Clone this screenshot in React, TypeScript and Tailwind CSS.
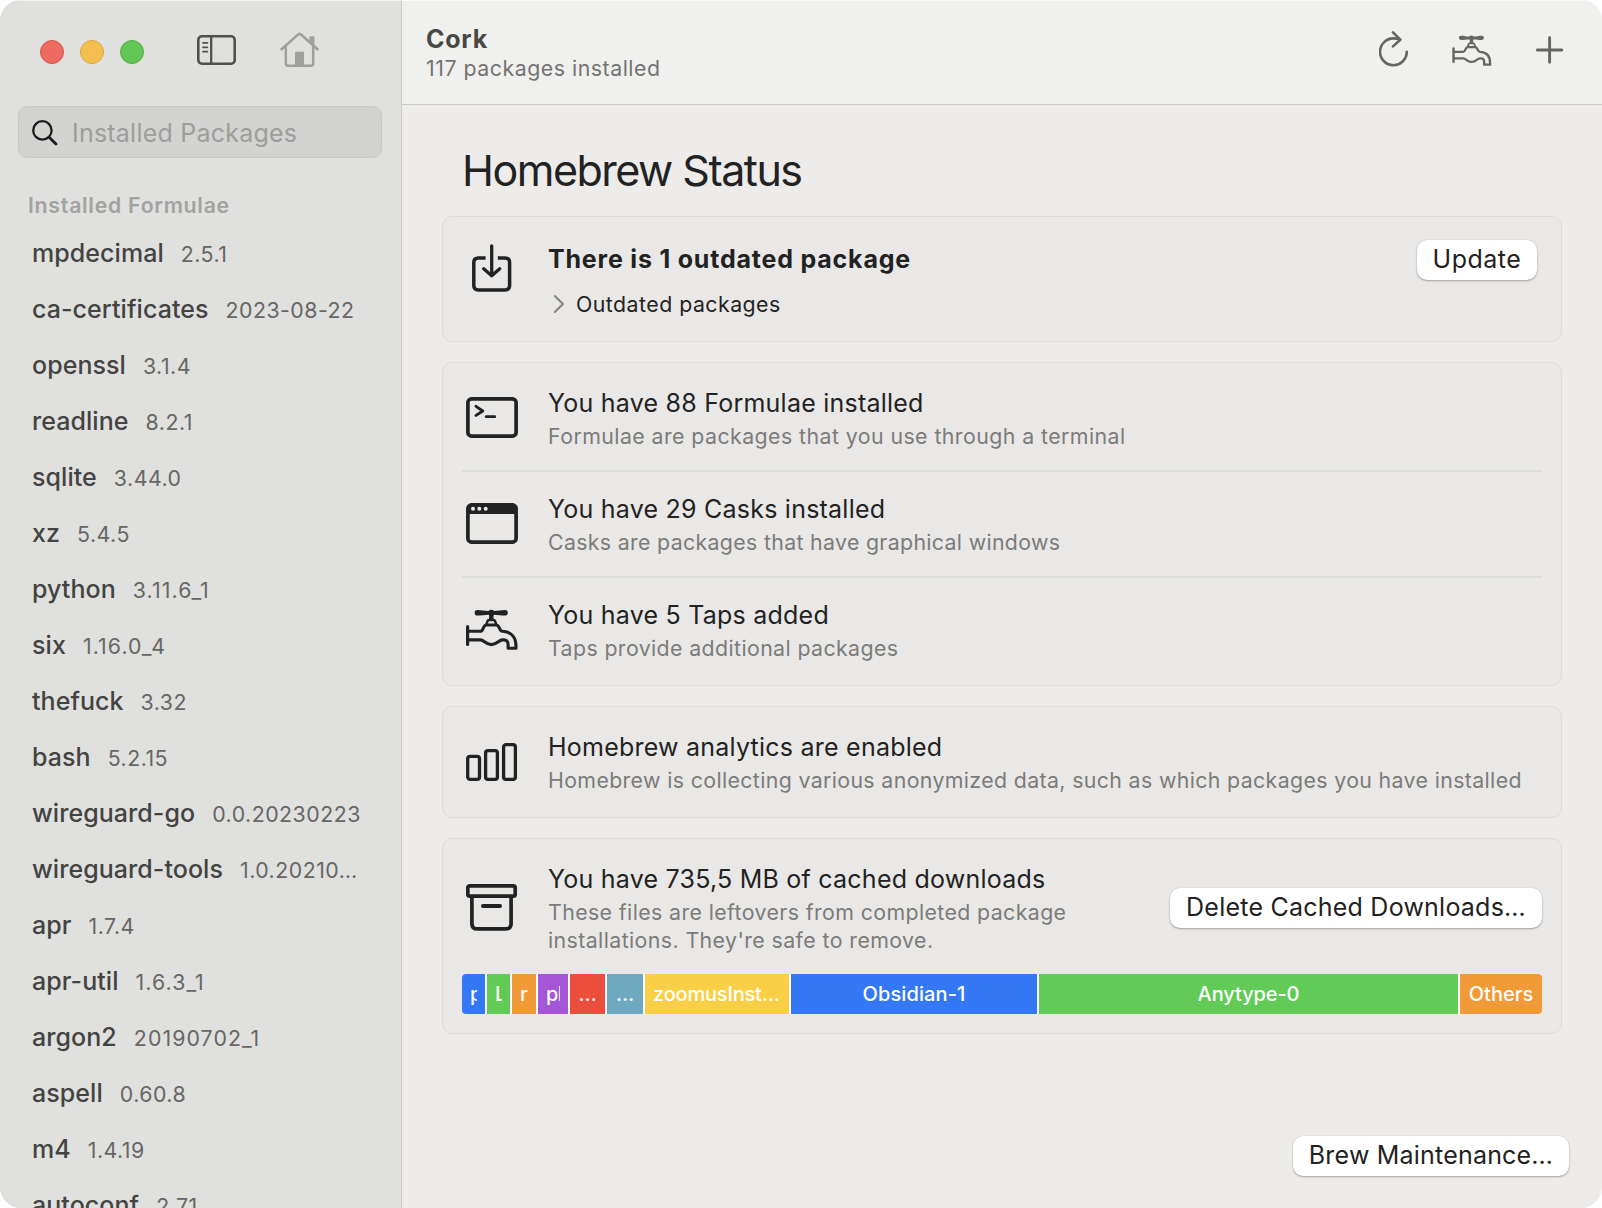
import type { ReactNode } from "react";

const formulae: [string, string][] = [
  ["mpdecimal", "2.5.1"],
  ["ca-certificates", "2023-08-22"],
  ["openssl", "3.1.4"],
  ["readline", "8.2.1"],
  ["sqlite", "3.44.0"],
  ["xz", "5.4.5"],
  ["python", "3.11.6_1"],
  ["six", "1.16.0_4"],
  ["thefuck", "3.32"],
  ["bash", "5.2.15"],
  ["wireguard-go", "0.0.20230223"],
  ["wireguard-tools", "1.0.20210…"],
  ["apr", "1.7.4"],
  ["apr-util", "1.6.3_1"],
  ["argon2", "20190702_1"],
  ["aspell", "0.60.8"],
  ["m4", "1.4.19"],
  ["autoconf", "2.71"],
];

/* ---------- Icons ---------- */

function SidebarIcon() {
  return (
    <svg width="39" height="30" viewBox="0 0 39 30" fill="none" stroke="#50504f">
      <rect x="1.3" y="1.3" width="36.4" height="27.4" rx="3.6" strokeWidth="2.6" />
      <path d="M14.2 1.5V28.5" strokeWidth="2.3" />
      <path d="M6 7.8h4.4M6 12.3h4.4M6 16.7h4.4" strokeWidth="1.7" strokeLinecap="round" />
    </svg>
  );
}

function HouseIcon() {
  return (
    <svg width="40" height="36" viewBox="0 0 40 36" fill="none" stroke="#9f9f9d">
      <path d="M1.5 17.2 18 2.6Q19.5 1.3 21 2.6L37.5 17.2" strokeWidth="2.6" strokeLinecap="round" strokeLinejoin="round" />
      <path d="M5.8 14V31.2Q5.8 33.8 8.4 33.8H30.6Q33.2 33.8 33.2 31.2V14" strokeWidth="2.5" />
      <path d="M30.2 4.2h3.4q.8 0 .8.8v8.8l-5-4.4V5q0-.8.8-.8Z" fill="#9f9f9d" stroke="none" />
      <path d="M15 34V21q0-1.2 1.2-1.2h6.6q1.2 0 1.2 1.2V34Z" fill="#9f9f9d" stroke="none" />
    </svg>
  );
}

function SearchIcon() {
  return (
    <svg width="26" height="26" viewBox="0 0 26 26" fill="none" stroke="#1b1b1b" strokeLinecap="round">
      <circle cx="10.4" cy="10.4" r="9.2" strokeWidth="2.3" />
      <path d="m17.4 17.4 6.6 6.6" strokeWidth="2.8" />
    </svg>
  );
}

function RefreshIcon() {
  return (
    <svg width="30" height="36" viewBox="0 0 30 36" fill="none" stroke="#656564" strokeWidth="2.6" strokeLinecap="round" strokeLinejoin="round">
      <path d="M27.8 20.8A13.4 13.4 0 1 1 14.4 7.4Q18.5 7.4 21 8.4" />
      <path d="M14 1.4 21.3 8.7 14 15.4" />
    </svg>
  );
}

function FaucetIcon({ width, height, color }: { width: number; height: number; color: string }) {
  return (
    <svg width={width} height={height} viewBox="0 0 52 41" fill="none" stroke={color} strokeLinecap="round" strokeLinejoin="round">
      <path d="M11.4 1C15 1 19 2 22.4 2a3.8 3.8 0 0 1 5.8 0C31.6 2 35.4 1 39 1a2.8 2.8 0 0 1 0 5.6C35.4 6.6 31.6 5.8 28.2 5.8a3.8 3.8 0 0 1-5.8 0C19 5.8 15 6.6 11.4 6.6a2.8 2.8 0 0 1 0-5.6Z" fill={color} stroke="none" />
      <path d="M25.3 5.5V11" strokeWidth="4.4" strokeLinecap="butt" />
      <path d="M20.4 15.4 21.6 11.9Q21.9 11.1 22.8 11.1H27.8Q28.7 11.1 29 11.9L30.2 15.4" strokeWidth="2.5" />
      <path d="M1.6 17.7V35.4" strokeWidth="3.2" />
      <path d="M2 22.3H14.4C17.6 22.3 16.8 16 20.4 16H30.2C33.8 16 33 22 36.4 22.3C44.5 22.6 50 27.4 50 37.4V39.2H42.1V35.4C42.1 32.6 40.6 30.9 38 30.9H36.4C32.6 30.9 31.6 35.6 25.4 35.6S18.2 30.9 14.4 30.9H2" strokeWidth="3.1" />
    </svg>
  );
}

function PlusIcon() {
  return (
    <svg width="28" height="28" viewBox="0 0 28 28" fill="none" stroke="#656564" strokeWidth="2.9" strokeLinecap="round">
      <path d="M13.6 1.8V26.2M1.4 14H25.8" />
    </svg>
  );
}

function DownloadIcon() {
  return (
    <svg width="40" height="48" viewBox="0 0 40 48" fill="none" stroke="#222" strokeLinecap="round" strokeLinejoin="round">
      <path d="M13.6 14H6.4Q1.8 14 1.8 18.6V41.3Q1.8 45.9 6.4 45.9H33Q37.6 45.9 37.6 41.3V18.6Q37.6 14 33 14H25.8" strokeWidth="3.5" strokeLinecap="butt" />
      <path d="M19.7 1.8V31M11.7 24.8 19.7 31.8 27.7 24.8" strokeWidth="3.3" />
    </svg>
  );
}

function TerminalIcon() {
  return (
    <svg width="52" height="41" viewBox="0 0 52 41" fill="none" stroke="#222" strokeLinecap="round" strokeLinejoin="round">
      <rect x="1.9" y="1.9" width="48.2" height="37.2" rx="3.6" strokeWidth="3.7" />
      <path d="M10 9.4 16.8 14 10 18.4" strokeWidth="2.9" />
      <path d="M20.2 19.7H28.8" strokeWidth="2.7" />
    </svg>
  );
}

function WindowIcon() {
  return (
    <svg width="52" height="41" viewBox="0 0 52 41" fill="none">
      <rect x="1.9" y="1.9" width="48.2" height="37.2" rx="3.6" stroke="#222" strokeWidth="3.7" />
      <path d="M2 4Q2 2 4 2H48Q50 2 50 4V11H2Z" fill="#222" />
      <g fill="#e9e8e6">
        <circle cx="7" cy="5.8" r="2" />
        <circle cx="13.3" cy="5.8" r="2" />
        <circle cx="19.7" cy="5.8" r="2" />
      </g>
    </svg>
  );
}

function BarsIcon() {
  return (
    <svg width="52" height="38" viewBox="0 0 52 38" fill="none" stroke="#222" strokeWidth="3.3">
      <rect x="1.7" y="13.4" width="11.8" height="23" rx="2.4" />
      <rect x="19.6" y="7.6" width="11.8" height="28.8" rx="2.4" />
      <rect x="37.6" y="1.7" width="11.8" height="34.7" rx="2.4" />
    </svg>
  );
}

function ArchiveIcon() {
  return (
    <svg width="52" height="48" viewBox="0 0 52 48" fill="none" stroke="#222" strokeWidth="3.7">
      <path d="M5.9 14V39.4Q5.9 44.9 11.4 44.9H39.6Q45.1 44.9 45.1 39.4V14" />
      <rect x="1.8" y="1.8" width="47.4" height="10.4" rx="2" />
      <path d="M17 22H34" strokeWidth="4" strokeLinecap="round" />
    </svg>
  );
}

/* ---------- Building blocks ---------- */

function Card({ children, className = "" }: { children: ReactNode; className?: string }) {
  return <section className={"rounded-[10px] border border-[#dcdbd9] bg-[#e9e8e6] px-[19px] " + className}>{children}</section>;
}

function Title({ children }: { children: ReactNode }) {
  return <div className="pt-px text-[25px] leading-[33px] tracking-[0.23px] whitespace-nowrap text-[#222]">{children}</div>;
}

function Sub({ children, className = "" }: { children: ReactNode; className?: string }) {
  return <div className={"text-[21.3px] leading-7 whitespace-nowrap text-[#7b7b7a] " + className}>{children}</div>;
}

function IconCell({ children }: { children: ReactNode }) {
  return <div className="ml-1 flex w-[52px] shrink-0 justify-center">{children}</div>;
}

function Row({ icon, title, sub, tracking }: { icon: ReactNode; title: string; sub: string; tracking: string }) {
  return (
    <div className="flex h-[104px] items-center">
      <IconCell>{icon}</IconCell>
      <div className="ml-[30px] flex flex-col gap-0.5">
        <Title>{title}</Title>
        <Sub className={tracking}>{sub}</Sub>
      </div>
    </div>
  );
}

function PushButton({ children, className = "" }: { children: ReactNode; className?: string }) {
  return (
    <button
      className={
        "flex h-10 shrink-0 items-start justify-center rounded-[10px] bg-white text-[25px] leading-[38px] whitespace-nowrap text-[#222] shadow-[0_0_1px_rgba(0,0,0,0.2),0_1px_2px_rgba(0,0,0,0.3)] " +
        className
      }
    >
      {children}
    </button>
  );
}

function Segment({ label, className }: { label: string; className: string }) {
  return (
    <div className={"flex h-10 shrink-0 items-center px-2 text-[20px] font-medium text-white " + className}>
      <span className="min-w-0 flex-1 overflow-hidden whitespace-nowrap">{label}</span>
    </div>
  );
}

/* ---------- Window ---------- */

export default function App() {
  return (
    <div className="h-[1208px] w-[1602px] bg-white">
      <div className="flex h-full w-full overflow-hidden rounded-[21px] bg-[#edecea] font-['Inter',sans-serif]">
        <aside className="flex w-[402px] shrink-0 flex-col overflow-hidden border-t border-r border-t-[#f4f4f3] border-r-[#c8c8c6] bg-[#e0e0de]">
          <div className="flex h-[105px] shrink-0 items-start pl-10">
            <div className="mt-[39px] flex gap-4">
              <span className="size-6 rounded-full border border-[#d6544a] bg-[#ed6b60]" />
              <span className="size-6 rounded-full border border-[#dba53f] bg-[#f5bf4f]" />
              <span className="size-6 rounded-full border border-[#50ad42] bg-[#62c655]" />
            </div>
            <div className="mt-[34px] ml-[53px]"><SidebarIcon /></div>
            <div className="mt-[31px] ml-11"><HouseIcon /></div>
          </div>

          <div className="mr-[19px] ml-[18px] flex h-[52px] shrink-0 items-center rounded-[9px] border border-[#c9c9c7] bg-[#d3d3d1] pl-[13px]">
            <div className="mt-px"><SearchIcon /></div>
            <span className="mt-[3px] ml-3.5 text-[25px] tracking-[0.22px] text-[#9d9d9b]">Installed Packages</span>
          </div>

          <div className="mt-[31px] ml-7 h-8 shrink-0 text-[21.3px] leading-8 font-semibold tracking-[0.72px] text-[#a2a2a0]">
            Installed Formulae
          </div>

          <ul className="mt-1 shrink-0">
            {formulae.map(([name, version]) => (
              <li key={name} className="flex h-14 items-baseline gap-[17px] pl-8 leading-[56px] whitespace-nowrap">
                <span className="text-[25px] font-[450] tracking-[0.06px] text-[#434342]">{name}</span>
                <span className={"text-[21.3px] text-[#666665] " + (version.includes("_") ? "tracking-[1.1px]" : "tracking-[0.5px]")}>
                  {version}
                </span>
              </li>
            ))}
          </ul>
        </aside>

        <main className="flex min-w-0 flex-1 flex-col">
          <header className="flex h-[105px] shrink-0 items-start border-t border-b border-t-[#fafaf9] border-b-[#c8c8c6] bg-[#f0f0ee] pl-6">
            <div className="mt-[22px]">
              <h1 className="text-[25px] leading-8 font-bold tracking-[0.75px] text-[#484847]">Cork</h1>
              <p className="-mt-px text-[21.3px] leading-7 tracking-[0.53px] text-[#737372]">117 packages installed</p>
            </div>
            <div className="mt-[30px] mr-[38px] ml-auto flex items-start">
              <RefreshIcon />
              <div className="mt-1 ml-[43px]"><FaucetIcon width={40} height={31} color="#656564" /></div>
              <div className="mt-[5px] ml-11"><PlusIcon /></div>
            </div>
          </header>

          <div className="flex min-h-0 flex-1 flex-col px-10">
            <h2 className="mt-[39px] ml-5 h-[52px] text-[43px] leading-[52px] tracking-[-1.5px] text-[#222]">Homebrew Status</h2>

            <div className="mt-5 flex flex-col gap-5">
              <Card className="flex h-[126px] items-start pr-6">
                <div className="mt-[27px]"><IconCell><DownloadIcon /></IconCell></div>
                <div className="mt-[26px] ml-[30px]">
                  <div className="text-[25px] leading-8 font-bold tracking-[0.8px] text-[#222]">There is 1 outdated package</div>
                  <div className="mt-[15px] flex items-center">
                    <svg width="20" height="20" viewBox="0 0 20 20" fill="none" stroke="#7f7f7e" strokeWidth="1.9" strokeLinecap="round" strokeLinejoin="round">
                      <path d="M6.8 2 15 10 6.8 18" />
                    </svg>
                    <span className="ml-2 text-[21.3px] leading-7 tracking-[0.48px] text-[#222]">Outdated packages</span>
                  </div>
                </div>
                <PushButton className="mt-[23px] ml-auto w-[120px] tracking-[0.5px]">Update</PushButton>
              </Card>

              <Card className="py-[3px]">
                <Row icon={<div className="pb-px"><TerminalIcon /></div>} title="You have 88 Formulae installed" sub="Formulae are packages that you use through a terminal" tracking="tracking-[0.44px]" />
                <div className="h-0.5 bg-[#dcdcda]" />
                <Row icon={<div className="pb-px"><WindowIcon /></div>} title="You have 29 Casks installed" sub="Casks are packages that have graphical windows" tracking="tracking-[0.34px]" />
                <div className="h-0.5 bg-[#dcdcda]" />
                <Row icon={<div className="pb-px"><FaucetIcon width={52} height={41} color="#222" /></div>} title="You have 5 Taps added" sub="Taps provide additional packages" tracking="tracking-[0.4px]" />
              </Card>

              <Card className="py-[3px]">
                <Row
                  icon={<BarsIcon />}
                  title="Homebrew analytics are enabled"
                  sub="Homebrew is collecting various anonymized data, such as which packages you have installed"
                  tracking="tracking-[0.375px]"
                />
              </Card>

              <Card className="flex h-[196px] flex-col">
                <div className="mt-[23px] flex h-[92px] items-center">
                  <IconCell><ArchiveIcon /></IconCell>
                  <div className="ml-[30px] flex flex-col">
                    <Title>You have 735,5 MB of cached downloads</Title>
                    <Sub className="mt-0.5 tracking-[0.4px]">These files are leftovers from completed package</Sub>
                    <Sub className="tracking-[0.42px]">installations. They're safe to remove.</Sub>
                  </div>
                  <PushButton className="ml-auto w-[372px] tracking-[0.23px]">Delete Cached Downloads…</PushButton>
                </div>
                <div className="mt-5 flex w-[1080px] gap-0.5 overflow-hidden rounded-[4px] bg-white">
                  <Segment label="p" className="w-[23px] bg-[#3478f6]" />
                  <Segment label="L" className="w-[23px] bg-[#62cb57]" />
                  <Segment label="r" className="w-6 bg-[#f19a38]" />
                  <Segment label="pl" className="w-[30px] bg-[#a456d7] tracking-[-0.7px]" />
                  <Segment label="…" className="w-[35px] bg-[#eb4e3d] text-center" />
                  <Segment label="…" className="w-9 bg-[#6fa9c0] text-center" />
                  <Segment label="zoomusInst…" className="w-[144px] bg-[#f8cf47] tracking-[-0.2px]" />
                  <Segment label="Obsidian-1" className="w-[246px] bg-[#3478f6] text-center tracking-[0.1px]" />
                  <Segment label="Anytype-0" className="w-[419px] bg-[#62cb57] text-center tracking-[-0.1px]" />
                  <Segment label="Others" className="w-[82px] bg-[#f19a38] text-center" />
                </div>
              </Card>
            </div>

            <PushButton className="mt-auto -mr-[7px] mb-8 w-[276px] self-end tracking-[0.2px]">Brew Maintenance…</PushButton>
          </div>
        </main>
      </div>
    </div>
  );
}
